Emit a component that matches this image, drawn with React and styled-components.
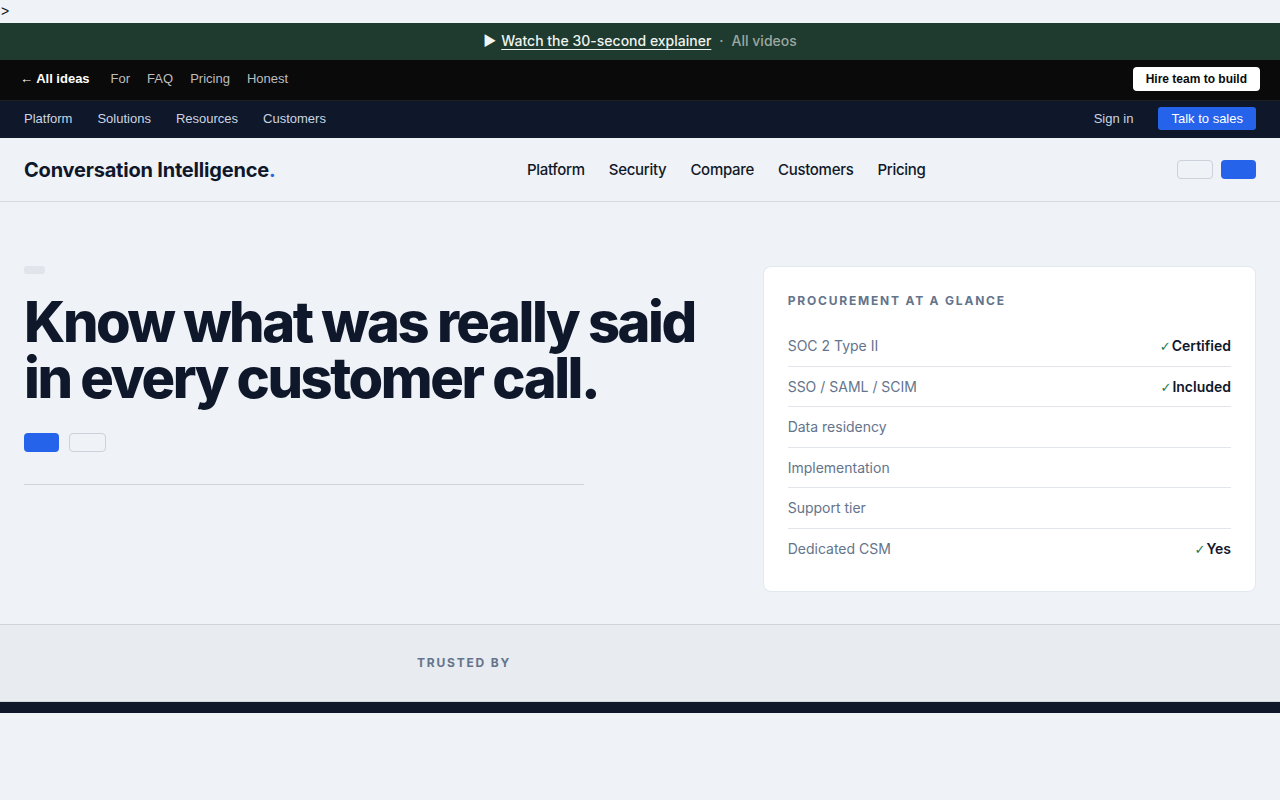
import React from 'react'
import styled, { createGlobalStyle } from 'styled-components'

const GlobalStyle = createGlobalStyle`
  body {
    margin: 0;
    background: #eff2f7;
    font-family: Inter, "Noto Sans", sans-serif;
    color: #0f172a;
  }
`

const Stray = styled.div`
  height: 23px;
  padding-left: 1px;
  font: 14px "Liberation Sans", Arial, sans-serif;
  line-height: 23px;
  color: #111;
`

const Announce = styled.div`
  height: 37px;
  box-sizing: border-box;
  padding-bottom: 2px;
  background: #1f3b2f;
  display: flex;
  align-items: center;
  justify-content: center;
  gap: 8px;
  font-size: 14px;
  font-weight: 500;
  color: #9aa8a0;
`

const Play = styled.span`
  color: #f2f5f3;
  font-size: 14px;
  margin-right: -3px;
`

const Explainer = styled.a`
  color: #eef3ef;
  text-decoration: underline;
  text-underline-offset: 3px;
`

const TopBar = styled.div`
  height: 41px;
  box-sizing: border-box;
  padding: 0 20px 3px 20px;
  background: #0a0a0a;
  border-bottom: 1px solid #1f1f1f;
  display: flex;
  align-items: center;
  justify-content: space-between;
  font-family: "Liberation Sans", Arial, sans-serif;
  font-size: 13px;
`

const TopLinks = styled.div`
  display: flex;
  align-items: center;
  gap: 17px;
`

const TopLink = styled.span`
  color: ${p => (p.$strong ? '#ffffff' : '#bdbdbd')};
  font-weight: ${p => (p.$strong ? 700 : 400)};
  margin-right: ${p => (p.$strong ? '4px' : '0')};
`

const HireButton = styled.button`
  height: 24px;
  padding: 0 13px;
  border: none;
  border-radius: 4px;
  background: #ffffff;
  color: #0a0a0a;
  font-family: "Liberation Sans", Arial, sans-serif;
  font-size: 12px;
  font-weight: 700;
`

const NavBar = styled.div`
  height: 37px;
  box-sizing: border-box;
  padding: 0 24px 2px;
  background: #0f172a;
  display: flex;
  align-items: center;
  justify-content: space-between;
  font-family: "Liberation Sans", Arial, sans-serif;
  font-size: 13px;
  color: #cbd5e1;
`

const NavGroup = styled.div`
  display: flex;
  align-items: center;
  gap: ${p => p.$gap || 25}px;
`

const SalesButton = styled.button`
  height: 23px;
  padding: 0 13px;
  border: none;
  border-radius: 3px;
  background: #2563eb;
  color: #ffffff;
  font-family: "Liberation Sans", Arial, sans-serif;
  font-size: 13px;
`

const Header = styled.header`
  height: 63px;
  border-bottom: 1px solid #d6dae0;
  display: flex;
  align-items: center;
  justify-content: space-between;
  padding: 0 24px;
`

const Logo = styled.div`
  font-size: 20px;
  font-weight: 700;
  letter-spacing: -0.01em;
  color: #0f172a;
  span { color: #2563eb; }
`

const MainNav = styled.nav`
  display: flex;
  gap: 24px;
  font-size: 15px;
  font-weight: 500;
  letter-spacing: -0.02em;
  color: #111827;
`

const GhostButton = styled.button`
  width: ${p => p.$w || 36}px;
  height: 19px;
  padding: 0;
  border: 1px solid #cbd2dc;
  border-radius: 4px;
  background: transparent;
`

const SolidButton = styled.button`
  width: ${p => p.$w || 35}px;
  height: 19px;
  padding: 0;
  border: none;
  border-radius: 4px;
  background: #2563eb;
`

const Hero = styled.section`
  display: grid;
  grid-template-columns: 1.4fr 1fr;
  gap: 48px;
  padding: 64px 24px 32px;
  align-items: start;
`

const Pill = styled.div`
  width: 21px;
  height: 8px;
  border-radius: 3px;
  background: #e1e5eb;
`

const Headline = styled.h1`
  margin: 20px 0 0;
  font-size: 56px;
  line-height: 56px;
  font-weight: 800;
  letter-spacing: -0.044em;
  color: #0f172a;
`

const Actions = styled.div`
  display: flex;
  gap: 10px;
  margin-top: 27px;
`

const Rule = styled.hr`
  width: 560px;
  margin: 32px 0 0;
  border: none;
  border-top: 1px solid #d1d5db;
`

const Card = styled.div`
  background: #ffffff;
  border: 1px solid #e2e8f0;
  border-radius: 8px;
  padding: 26px 24px 23px;
`

const Eyebrow = styled.div`
  font-size: 12px;
  line-height: 16px;
  font-weight: 700;
  letter-spacing: 0.15em;
  text-transform: uppercase;
  color: #64748b;
`

const CardTitle = styled(Eyebrow)`
  margin-bottom: 17px;
`

const Row = styled.div`
  box-sizing: border-box;
  height: 40.5px;
  display: flex;
  justify-content: space-between;
  align-items: center;
  font-size: 14px;
  border-bottom: 1px solid #e2e5ea;
  &:last-child {
    border-bottom: none;
    height: 39.5px;
  }
`

const Label = styled.span`
  color: #64748b;
`

const Value = styled.span`
  font-weight: 600;
  color: #0f172a;
`

const Check = styled.span`
  color: #177a52;
  font-family: "DejaVu Sans", sans-serif;
  font-size: 13px;
  margin-right: 1px;
`

const Trusted = styled.section`
  height: 76px;
  background: #e8ebf0;
  border-top: 1px solid #d1d5db;
  border-bottom: 1px solid #d1d5db;
  display: flex;
  align-items: center;
  justify-content: center;
  gap: 32px;
`

const LogoStrip = styled.div`
  width: 320px;
`

const Footer = styled.footer`
  height: 11px;
  background: #0f172a;
`

const rows = [
  ['SOC 2 Type II', 'Certified'],
  ['SSO / SAML / SCIM', 'Included'],
  ['Data residency'],
  ['Implementation'],
  ['Support tier'],
  ['Dedicated CSM', 'Yes'],
]

export default function App() {
  return (
    <>
      <GlobalStyle />
      <Stray>{'>'}</Stray>
      <Announce>
        <Play>▶</Play>
        <Explainer>Watch the 30-second explainer</Explainer>
        <span>·</span>
        <span>All videos</span>
      </Announce>
      <TopBar>
        <TopLinks>
          <TopLink $strong>← All ideas</TopLink>
          <TopLink>For</TopLink>
          <TopLink>FAQ</TopLink>
          <TopLink>Pricing</TopLink>
          <TopLink>Honest</TopLink>
        </TopLinks>
        <HireButton>Hire team to build</HireButton>
      </TopBar>
      <NavBar>
        <NavGroup>
          <span>Platform</span>
          <span>Solutions</span>
          <span>Resources</span>
          <span>Customers</span>
        </NavGroup>
        <NavGroup $gap={25}>
          <span>Sign in</span>
          <SalesButton>Talk to sales</SalesButton>
        </NavGroup>
      </NavBar>
      <Header>
        <Logo>Conversation Intelligence<span>.</span></Logo>
        <MainNav>
          <span>Platform</span>
          <span>Security</span>
          <span>Compare</span>
          <span>Customers</span>
          <span>Pricing</span>
        </MainNav>
        <NavGroup $gap={8}>
          <GhostButton />
          <SolidButton />
        </NavGroup>
      </Header>
      <Hero>
        <div>
          <Pill />
          <Headline>Know what was really said in every customer call.</Headline>
          <Actions>
            <SolidButton />
            <GhostButton $w={37} />
          </Actions>
          <Rule />
        </div>
        <Card>
          <CardTitle>Procurement at a glance</CardTitle>
          {rows.map(([label, value]) => (
            <Row key={label}>
              <Label>{label}</Label>
              {value && (
                <Value><Check>✓</Check>{value}</Value>
              )}
            </Row>
          ))}
        </Card>
      </Hero>
      <Trusted>
        <Eyebrow>Trusted by</Eyebrow>
        <LogoStrip />
      </Trusted>
      <Footer />
    </>
  )
}
